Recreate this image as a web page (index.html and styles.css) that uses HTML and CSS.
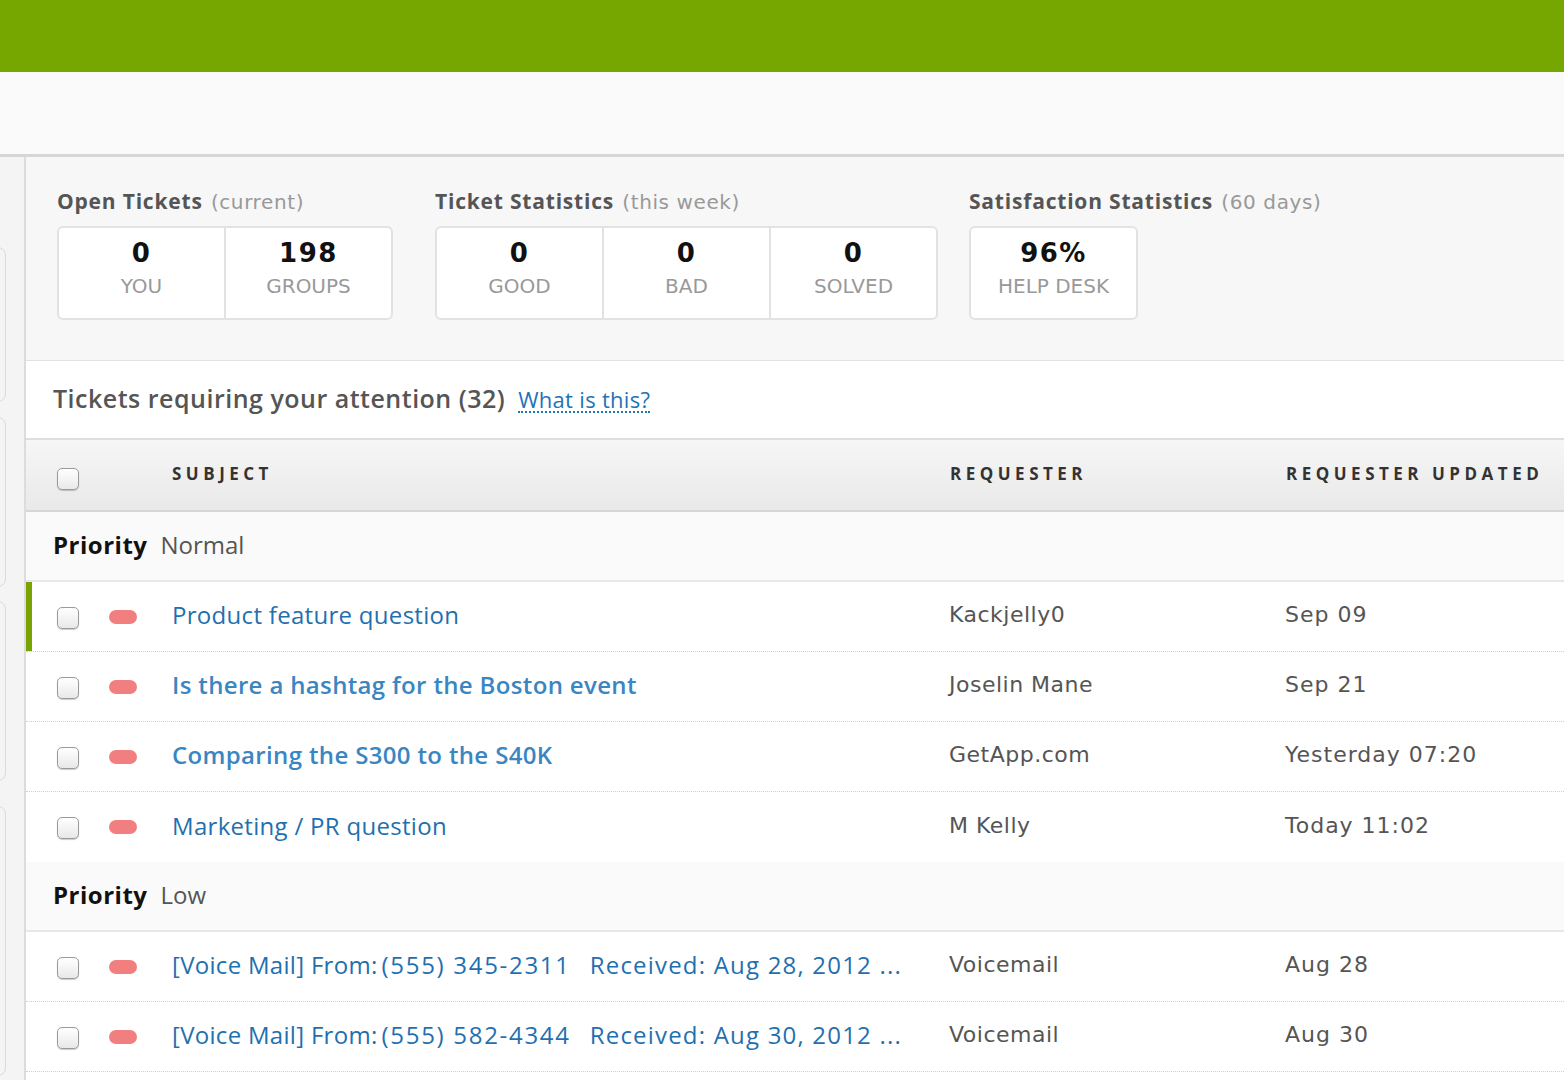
FILE: index.html
```html
<!DOCTYPE html>
<html lang="en">
  <head>
    <meta charset="UTF-8" />
    <meta name="viewport" content="width=device-width, initial-scale=1.0" />
    <title>Dashboard</title>
    <link rel="stylesheet" href="styles.css">
  </head>
  <body>
    <div class="topbar"></div>
    <div class="subheader"></div>

    <div class="layout">
      <div class="sidebar">
        <div class="panel panel-1"></div>
        <div class="panel panel-2"></div>
        <div class="panel panel-3"></div>
        <div class="panel panel-4"></div>
      </div>

      <div class="main">
        <div class="stats">
          <div class="stat-group group-open">
            <h3>Open Tickets <span>(current)</span></h3>
            <div class="stat-box">
              <div class="stat-cell"><b>0</b><small>YOU</small></div>
              <div class="stat-cell"><b>198</b><small>GROUPS</small></div>
            </div>
          </div>
          <div class="stat-group group-week">
            <h3>Ticket Statistics <span>(this week)</span></h3>
            <div class="stat-box">
              <div class="stat-cell"><b>0</b><small>GOOD</small></div>
              <div class="stat-cell"><b>0</b><small>BAD</small></div>
              <div class="stat-cell"><b>0</b><small>SOLVED</small></div>
            </div>
          </div>
          <div class="stat-group">
            <h3>Satisfaction Statistics <span>(60 days)</span></h3>
            <div class="stat-box">
              <div class="stat-cell"><b>96%</b><small>HELP DESK</small></div>
            </div>
          </div>
        </div>

        <div class="attention">
          <h2>Tickets requiring your attention (32)</h2>
          <a href="#" class="help-link">What is this?</a>
        </div>

        <div class="table">
          <div class="row head">
            <input type="checkbox" class="cb" />
            <div class="col-subject">SUBJECT</div>
            <div class="col-requester">REQUESTER</div>
            <div class="col-updated">REQUESTER UPDATED</div>
          </div>

          <div class="group-row"><strong>Priority</strong> Normal</div>

          <div class="row ticket active">
            <input type="checkbox" class="cb" />
            <span class="pill"></span>
            <div class="col-subject"><a href="#">Product feature question</a></div>
            <div class="col-requester">Kackjelly0</div>
            <div class="col-updated">Sep 09</div>
          </div>
          <div class="row ticket">
            <input type="checkbox" class="cb" />
            <span class="pill"></span>
            <div class="col-subject"><a href="#" class="unread">Is there a hashtag for the Boston event</a></div>
            <div class="col-requester">Joselin Mane</div>
            <div class="col-updated">Sep 21</div>
          </div>
          <div class="row ticket">
            <input type="checkbox" class="cb" />
            <span class="pill"></span>
            <div class="col-subject"><a href="#" class="unread">Comparing the S300 to the S40K</a></div>
            <div class="col-requester">GetApp.com</div>
            <div class="col-updated">Yesterday 07:20</div>
          </div>
          <div class="row ticket last">
            <input type="checkbox" class="cb" />
            <span class="pill"></span>
            <div class="col-subject"><a href="#">Marketing / PR question</a></div>
            <div class="col-requester">M Kelly</div>
            <div class="col-updated">Today 11:02</div>
          </div>

          <div class="group-row"><strong>Priority</strong> Low</div>

          <div class="row ticket">
            <input type="checkbox" class="cb" />
            <span class="pill"></span>
            <div class="col-subject"><a href="#">[Voice Mail] From:<span class="phone">(555) 345-2311</span><span class="received">Received: Aug 28, 2012 ...</span></a></div>
            <div class="col-requester">Voicemail</div>
            <div class="col-updated">Aug 28</div>
          </div>
          <div class="row ticket">
            <input type="checkbox" class="cb" />
            <span class="pill"></span>
            <div class="col-subject"><a href="#">[Voice Mail] From:<span class="phone">(555) 582-4344</span><span class="received">Received: Aug 30, 2012 ...</span></a></div>
            <div class="col-requester">Voicemail</div>
            <div class="col-updated">Aug 30</div>
          </div>
        </div>
      </div>
    </div>
  </body>
</html>
```

FILE: styles.css
```css
body {
  margin: 0;
  font-family: "Open Sans", "DejaVu Sans", sans-serif;
  color: #555;
  background: #fff;
  overflow: hidden;
}
.topbar {
  height: 72px;
  background-color: #76a600;
}
.subheader {
  height: 82px;
  background-color: #fafafa;
  border-bottom: 3px solid #d6d6d6;
}
.layout {
  display: flex;
}
.sidebar {
  width: 24px;
  flex-shrink: 0;
  background-color: #f4f4f4;
  border-right: 2px solid #dcdcdc;
  padding-top: 90px;
  min-height: 930px;
}
.panel {
  width: 24px;
  margin-left: -20px;
  border: 1px solid #dadada;
  border-radius: 8px;
  background-color: #f4f4f4;
}
.panel-1 { height: 153px; }
.panel-2 { height: 168px; margin-top: 15px; }
.panel-3 { height: 178px; margin-top: 14px; }
.panel-4 { height: 268px; margin-top: 25px; }

.main {
  flex: 1;
  min-width: 0;
}

/* statistiky */
.stats {
  display: flex;
  align-items: flex-start;
  background-color: #f7f7f7;
  border-bottom: 1px solid #e2e2e2;
  padding: 31px 0 40px 31px;
}
.stat-group h3 {
  margin: 0 0 11px;
  font-size: 21px;
  line-height: 26px;
  font-weight: 700;
  color: #555;
  letter-spacing: 0.8px;
  white-space: nowrap;
}
.stat-group h3 span {
  font-family: "DejaVu Sans", sans-serif;
  font-weight: normal;
  font-size: 20px;
  letter-spacing: 0.6px;
  color: #999;
  margin-left: 2px;
}
.group-open { margin-right: 42px; }
.group-week { margin-right: 31px; }
.stat-box {
  display: flex;
  width: fit-content;
  background: #fff;
  border: 2px solid #e2e2e2;
  border-radius: 6px;
  height: 90px;
}
.stat-cell {
  width: 165px;
  display: flex;
  flex-direction: column;
  align-items: center;
  padding-top: 9px;
  font-family: "DejaVu Sans", sans-serif;
}
.stat-cell + .stat-cell {
  border-left: 2px solid #e2e2e2;
}
.stat-cell b {
  font-size: 26px;
  line-height: 32px;
  color: #111;
  letter-spacing: 1.5px;
}
.stat-cell small {
  font-size: 20px;
  line-height: 30px;
  color: #999;
  margin-top: 2px;
}

/* nadpis sekce */
.attention {
  display: flex;
  align-items: center;
  height: 73px;
  padding-left: 27px;
  padding-bottom: 4px;
  background: #fff;
  border-bottom: 2px solid #dedede;
}
.attention h2 {
  margin: 0;
  font-size: 25px;
  font-weight: 600;
  color: #555;
  letter-spacing: 0.5px;
}
.help-link {
  margin-left: 13px;
  font-size: 22px;
  letter-spacing: 0.3px;
  color: #1f73b7;
  text-decoration: none;
  border-bottom: 2px dotted #1f73b7;
  line-height: 24px;
  margin-top: 4px;
}

/* tabulka */
.row {
  display: flex;
  align-items: center;
  padding-left: 31px;
}
.cb {
  appearance: none;
  -webkit-appearance: none;
  width: 22px;
  height: 22px;
  margin: 0;
  flex-shrink: 0;
  border: 1px solid #9a9a9a;
  border-radius: 5px;
  background: linear-gradient(#ffffff, #f4f4f4 50%, #e8e8e8);
  box-shadow: 0 1px 1px rgba(0, 0, 0, 0.2);
}
.row.head {
  height: 67px;
  padding-bottom: 3px;
  background: linear-gradient(#f6f6f6, #e9e9e9);
  border-bottom: 2px solid #d6d6d6;
  font-weight: 700;
  font-size: 17px;
  letter-spacing: 4.5px;
  color: #333;
}
.row.head .cb {
  margin-top: 11px;
}
.row.head .col-subject {
  margin-left: 93px;
  width: 778px;
}
.col-subject {
  width: 777px;
  flex-shrink: 0;
  white-space: nowrap;
}
.col-requester {
  width: 336px;
  flex-shrink: 0;
  white-space: nowrap;
}
.col-updated {
  white-space: nowrap;
}
.ticket .col-updated {
  letter-spacing: 1px;
}
.group-row {
  height: 64px;
  padding-bottom: 4px;
  display: flex;
  align-items: center;
  padding-left: 27px;
  background-color: #fafafa;
  border-bottom: 2px solid #e8e8e8;
  font-size: 24px;
  color: #555;
}
.group-row strong {
  color: #111;
  margin-right: 13px;
  letter-spacing: 0.5px;
}
.ticket {
  height: 65px;
  padding-bottom: 4px;
  border-bottom: 1px dotted #cfcfcf;
  font-family: "DejaVu Sans", sans-serif;
  font-size: 22px;
  letter-spacing: 0.5px;
  color: #555;
}
.ticket.last {
  border-bottom: none;
  height: 66px;
}
.ticket.active {
  box-shadow: inset 6px 0 0 #78a300;
}
.ticket .cb {
  margin-top: 6px;
}
.pill {
  width: 28px;
  height: 14px;
  margin-top: 4px;
  margin-left: 30px;
  margin-right: 35px;
  border-radius: 7px;
  background-color: #f27f7f;
  flex-shrink: 0;
}
.ticket .col-subject a {
  font-family: "Open Sans", sans-serif;
  font-size: 24px;
  letter-spacing: 0.3px;
  color: #1f70b0;
  text-decoration: none;
}
.ticket .col-subject a.unread {
  font-weight: 600;
  color: #3a86c2;
  letter-spacing: 0.35px;
}
.phone {
  margin-left: 4px;
  letter-spacing: 1.7px;
}
.received {
  margin-left: 19px;
  letter-spacing: 1.2px;
}
```
